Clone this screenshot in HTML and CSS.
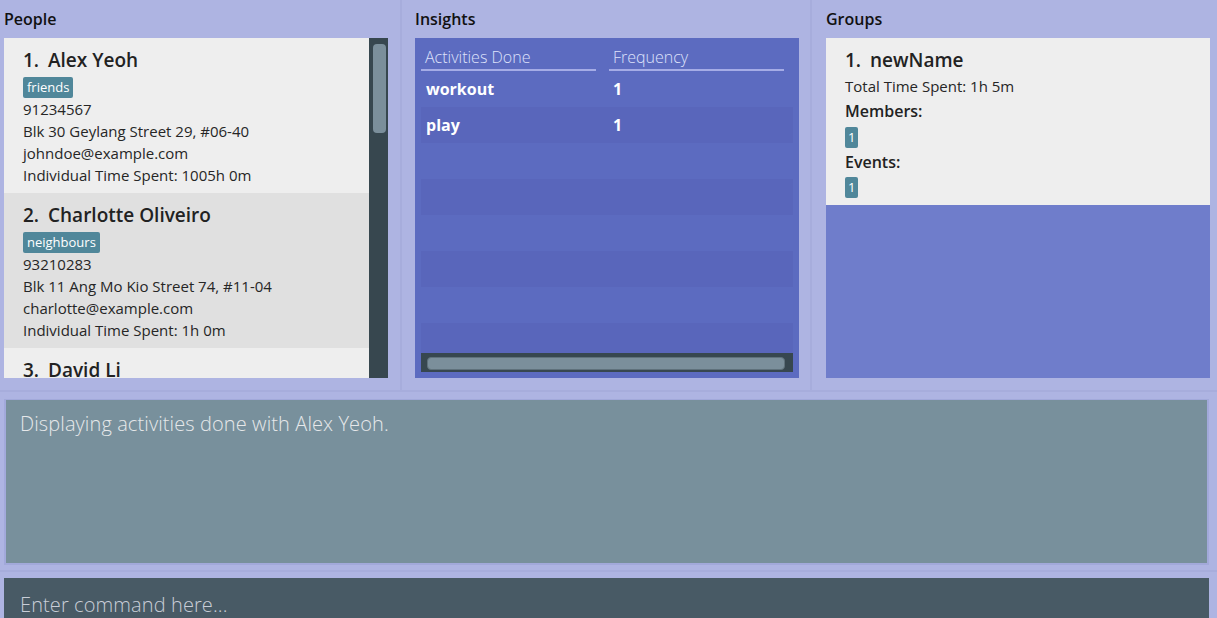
FILE: index.html
```html
<!DOCTYPE html>
<html>
<head>
<meta charset="utf-8">
<link rel="stylesheet" href="styles.css">
</head>
<body>
<div class="app">
  <div class="top">
    <section class="panel panel-people">
      <div class="panel-title">People</div>
      <div class="box people-box">
        <div class="list">
          <div class="card">
            <div class="name"><span class="idx">1.</span>Alex Yeoh</div>
            <div class="tags"><span class="tag">friends</span></div>
            <div class="line">91234567</div>
            <div class="line">Blk 30 Geylang Street 29, #06-40</div>
            <div class="line">johndoe@example.com</div>
            <div class="line">Individual Time Spent: 1005h 0m</div>
          </div>
          <div class="card alt">
            <div class="name"><span class="idx">2.</span>Charlotte Oliveiro</div>
            <div class="tags"><span class="tag">neighbours</span></div>
            <div class="line">93210283</div>
            <div class="line">Blk 11 Ang Mo Kio Street 74, #11-04</div>
            <div class="line">charlotte@example.com</div>
            <div class="line">Individual Time Spent: 1h 0m</div>
          </div>
          <div class="card">
            <div class="name"><span class="idx">3.</span>David Li</div>
          </div>
        </div>
        <div class="vscroll"><div class="vthumb"></div></div>
      </div>
    </section>
    <section class="panel panel-insights">
      <div class="panel-title">Insights</div>
      <div class="box insights-box">
        <div class="table">
          <div class="thead">
            <div class="th th1">Activities Done</div>
            <div class="th th2">Frequency</div>
          </div>
          <div class="rows">
            <div class="row"><div class="td td1">workout</div><div class="td td2">1</div></div>
            <div class="row odd"><div class="td td1">play</div><div class="td td2">1</div></div>
            <div class="row"></div>
            <div class="row odd"></div>
            <div class="row"></div>
            <div class="row odd"></div>
            <div class="row"></div>
            <div class="row odd short"></div>
          </div>
          <div class="hscroll"><div class="hthumb"></div></div>
        </div>
      </div>
    </section>
    <section class="panel panel-groups">
      <div class="panel-title">Groups</div>
      <div class="box groups-box">
        <div class="gcard">
          <div class="name gname"><span class="idx">1.</span>newName</div>
          <div class="line gtotal">Total Time Spent: 1h 5m</div>
          <div class="glabel">Members:</div>
          <div class="gbadges first"><span class="badge">1</span></div>
          <div class="glabel">Events:</div>
          <div class="gbadges"><span class="badge">1</span></div>
        </div>
      </div>
    </section>
  </div>
  <div class="result-section">
    <div class="result-box">Displaying activities done with Alex Yeoh.</div>
  </div>
  <div class="command-section">
    <div class="command-box">Enter command here...</div>
  </div>
</div>
</body>
</html>
```
FILE: styles.css
```css
* { box-sizing: border-box; }
html, body { margin: 0; padding: 0; }
body {
  width: 1217px;
  height: 618px;
  overflow: hidden;
  background: #aeb4e2;
  font-family: "Open Sans", "Noto Sans", sans-serif;
  color: #222222;
}
.app { display: flex; flex-direction: column; height: 618px; }

.top {
  display: flex;
  height: 392px;
  border-bottom: 2px solid #a7addc;
}
.panel {
  display: flex;
  flex-direction: column;
  height: 390px;
}
.panel-people { width: 402px; padding: 0 12px 0 4px; border-right: 2px solid #a7addc; }
.panel-insights { width: 410px; padding: 0 11px 0 13px; border-right: 2px solid #a7addc; }
.panel-groups { width: 405px; padding: 0 7px 0 14px; }

.panel-title {
  height: 38px;
  padding-top: 8px;
  line-height: 22px;
  font-size: 16px;
  font-weight: 600;
  color: #111111;
}
.box { width: 384px; height: 340px; overflow: hidden; }

/* People */
.people-box { display: flex; }
.list { flex: 1; background: #eeeeee; overflow: hidden; }
.card {
  background: #eeeeee;
  padding: 8px 10px 7px 19px;
}
.card.alt { background: #e0e0e0; }
.name {
  font-size: 19px;
  font-weight: 600;
  line-height: 28px;
  color: #222222;
}
.idx { display: inline-block; width: 25px; }
.tags { margin-top: 3px; height: 21px; display: flex; }
.tag {
  background: #50879a;
  color: #ffffff;
  font-size: 13px;
  line-height: 21px;
  padding: 0 4px;
  border-radius: 2px;
}
.line {
  font-size: 15px;
  line-height: 22px;
  color: #262626;
}
.vscroll {
  width: 19px;
  background: #37474f;
  padding: 6px 2px 0 4px;
}
.vthumb {
  height: 89px;
  background: #7b8f9b;
  border-radius: 4px;
}

/* Insights */
.insights-box {
  background: #5c6bc0;
  padding: 8px 6px 6px 6px;
}
.table { display: flex; flex-direction: column; height: 100%; }
.thead { display: flex; height: 25px; }
.th {
  font-size: 16px;
  font-weight: 300;
  line-height: 22px;
  color: #dfe2fb;
  border-bottom: 2px solid #a5ace6;
  padding-left: 4px;
}
.th1 { width: 175px; margin-right: 13px; }
.th2 { width: 175px; }
.rows { flex: 1; overflow: hidden; }
.row { display: flex; height: 36px; }
.row.odd { background: #5966bb; }
.row.short { height: 30px; }
.td {
  font-size: 16px;
  font-weight: 700;
  line-height: 36px;
  color: #ffffff;
}
.td1 { width: 192px; padding-left: 5px; }
.td2 { padding-left: 0; }
.hscroll {
  height: 19px;
  background: #37474f;
  padding: 4px 8px 2px 6px;
}
.hthumb {
  height: 13px;
  background: #7b8f9b;
  border: 1px solid #5f717b;
  border-radius: 4px;
}

/* Groups */
.groups-box { background: #6f7dcb; }
.gcard {
  background: #eeeeee;
  padding: 8px 10px 7px 19px;
}
.gname { line-height: 29px; }
.gtotal { line-height: 22px; }
.glabel {
  font-size: 16px;
  font-weight: 600;
  line-height: 28px;
  color: #222222;
}
.gbadges { display: flex; height: 21px; margin-top: 1px; }
.gbadges.first { margin-top: 2px; }
.badge {
  background: #50879a;
  color: #ffffff;
  font-size: 13px;
  line-height: 21px;
  padding: 0 3px;
  border-radius: 2px;
}

/* Result */
.result-section {
  height: 182px;
  padding: 7px 8px 0 4px;
  border-bottom: 2px solid #a7addc;
}
.result-box {
  height: 166px;
  background: #78909c;
  border: 2px solid #a2a9da;
  border-top-width: 1px;
  padding: 10px 14px;
  font-size: 20px;
  font-weight: 300;
  line-height: 28px;
  color: #e6e8ea;
  letter-spacing: 0.1px;
}

/* Command */
.command-section {
  flex: 1;
  padding: 6px 8px 0 4px;
}
.command-box {
  height: 40px;
  background: #485a65;
  padding: 13px 16px 0 16px;
  font-size: 20px;
  font-weight: 300;
  line-height: 28px;
  color: #c9ced8;
  letter-spacing: 0.1px;
}
```
